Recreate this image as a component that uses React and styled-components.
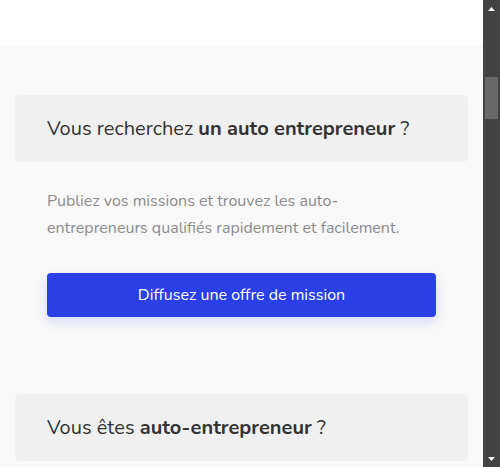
import React from "react";
import styled, { createGlobalStyle } from "styled-components";

const Global = createGlobalStyle`
  html, body { margin: 0; padding: 0; }
  body {
    font-family: "Nunito", Lato, "Noto Sans", sans-serif;
    background: #f8f8f8;
    overflow: hidden;
  }
`;

const Frame = styled.div`
  display: flex;
  width: 500px;
  height: 467px;
  overflow: hidden;
`;

const Page = styled.main`
  flex: 1;
  display: flex;
  flex-direction: column;
  min-width: 0;
`;

const TopBand = styled.div`
  height: 45px;
  background: #ffffff;
  flex: none;
`;

const Section = styled.section`
  flex: 1;
  background: #f8f8f8;
  padding: 50px 15px 0;
  display: flex;
  flex-direction: column;
  gap: 77px;
`;

const Block = styled.div`
  display: flex;
  flex-direction: column;
`;

const Card = styled.div`
  background: #f0f0f0;
  border-radius: 5px;
  padding: 20px 32px;
  font-size: 20px;
  line-height: 27px;
  color: #333333;
  font-weight: 400;
  strong { font-weight: 700; }
`;

const Body = styled.div`
  padding: 26px 32px 0;
  display: flex;
  flex-direction: column;
  gap: 31px;
`;

const Text = styled.p`
  margin: 0;
  font-size: 16px;
  line-height: 27px;
  color: #8c8c8c;
`;

const Button = styled.button`
  height: 44px;
  border: none;
  border-radius: 4px;
  background: #2b3fe6;
  color: #ffffff;
  font-family: inherit;
  font-size: 16px;
  box-shadow: 0 5px 12px rgba(43, 63, 230, 0.16);
  cursor: pointer;
`;

const ScrollBar = styled.div`
  width: 17px;
  flex: none;
  background: #424242;
  display: flex;
  flex-direction: column;
`;

const Arrow = styled.div`
  height: 17px;
  flex: none;
  display: flex;
  align-items: center;
  justify-content: center;
`;

const Track = styled.div`
  flex: 1;
  padding: 60px 2px 0;
`;

const Thumb = styled.div`
  height: 42px;
  background: #686868;
`;

const Tri = ({ down }) => (
  <svg width="7" height="4" viewBox="0 0 7 4">
    {down ? (
      <polygon points="0,0 7,0 3.5,4" fill="#f2f2f2" />
    ) : (
      <polygon points="0,4 7,4 3.5,0" fill="#f2f2f2" />
    )}
  </svg>
);

export default function App() {
  return (
    <>
      <Global />
      <Frame>
        <Page>
          <TopBand />
          <Section>
            <Block>
              <Card>
                Vous recherchez <strong>un auto entrepreneur</strong> ?
              </Card>
              <Body>
                <Text>
                  Publiez vos missions et trouvez les auto-entrepreneurs qualifiés
                  rapidement et facilement.
                </Text>
                <Button>Diffusez une offre de mission</Button>
              </Body>
            </Block>
            <Block>
              <Card>
                Vous êtes <strong>auto-entrepreneur</strong> ?
              </Card>
            </Block>
          </Section>
        </Page>
        <ScrollBar>
          <Arrow>
            <Tri />
          </Arrow>
          <Track>
            <Thumb />
          </Track>
          <Arrow>
            <Tri down />
          </Arrow>
        </ScrollBar>
      </Frame>
    </>
  );
}
